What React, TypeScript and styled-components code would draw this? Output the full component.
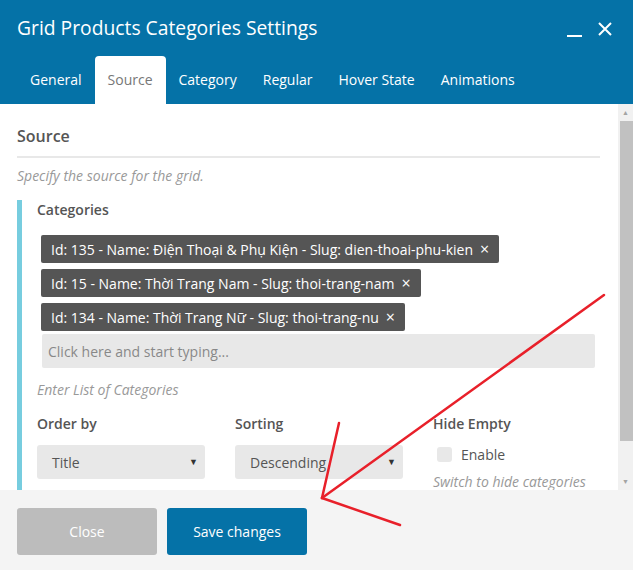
import React from 'react';
import styled, { createGlobalStyle } from 'styled-components';

const GlobalStyle = createGlobalStyle`
  html, body {
    margin: 0;
    padding: 0;
    background: #fff;
  }
  body {
    font-family: "Open Sans", "Liberation Sans", sans-serif;
  }
`;

const tabs = ['General', 'Source', 'Category', 'Regular', 'Hover State', 'Animations'];

const categories = [
  'Id: 135 - Name: Điện Thoại & Phụ Kiện - Slug: dien-thoai-phu-kien',
  'Id: 15 - Name: Thời Trang Nam - Slug: thoi-trang-nam',
  'Id: 134 - Name: Thời Trang Nữ - Slug: thoi-trang-nu',
];

const App = () => {
  return (
    <>
      <GlobalStyle />
      <Modal>
        <Header>
          <TitleRow>
            <Title>Grid Products Categories Settings</Title>
            <HeaderActions>
              <Minimize />
              <CloseIcon viewBox="0 0 16 16">
                <path d="M2 2 L14 14 M14 2 L2 14" stroke="#fff" strokeWidth="2" fill="none" />
              </CloseIcon>
            </HeaderActions>
          </TitleRow>
          <Tabs>
            {tabs.map((t) => (
              <Tab key={t} active={t === 'Source'}>{t}</Tab>
            ))}
          </Tabs>
        </Header>

        <Content>
          <Body>
            <SectionTitle>Source</SectionTitle>
            <Description>Specify the source for the grid.</Description>
            <Group>
              <Label>Categories</Label>
              <TagList>
                {categories.map((c) => (
                  <Tag key={c}>
                    {c}
                    <TagRemove>×</TagRemove>
                  </Tag>
                ))}
              </TagList>
              <TagInput>Click here and start typing...</TagInput>
              <Hint top={13}>Enter List of Categories</Hint>
              <FieldRow>
                <Field>
                  <Label>Order by</Label>
                  <Select>
                    Title
                    <Caret>▼</Caret>
                  </Select>
                </Field>
                <Field>
                  <Label>Sorting</Label>
                  <Select>
                    Descending
                    <Caret>▼</Caret>
                  </Select>
                </Field>
                <Field>
                  <Label>Hide Empty</Label>
                  <CheckRow>
                    <CheckBox />
                    <CheckLabel>Enable</CheckLabel>
                  </CheckRow>
                  <Hint top={9}>Switch to hide categories</Hint>
                </Field>
              </FieldRow>
            </Group>
          </Body>
          <Scrollbar>
            <ScrollArrow>▲</ScrollArrow>
            <ScrollTrack>
              <ScrollThumb />
            </ScrollTrack>
            <ScrollArrow>▼</ScrollArrow>
          </Scrollbar>
        </Content>

        <Footer>
          <Button variant="muted">Close</Button>
          <Button variant="primary">Save changes</Button>
        </Footer>

        <Annotation viewBox="0 0 633 570">
          <g stroke="#e8202a" strokeWidth="2.5" fill="none" strokeLinecap="round">
            <line x1="604" y1="295" x2="322" y2="498" />
            <line x1="339" y1="423" x2="322" y2="498" />
            <line x1="322" y1="498" x2="400" y2="525" />
          </g>
        </Annotation>
      </Modal>
    </>
  );
};

export default App;

const Modal = styled.div`
  position: relative;
  width: 633px;
  height: 570px;
  display: flex;
  flex-direction: column;
  overflow: hidden;
  background: #fff;
`;

const Header = styled.div`
  height: 104px;
  flex: 0 0 auto;
  background: #0572a7;
  display: flex;
  flex-direction: column;
  justify-content: space-between;
`;

const TitleRow = styled.div`
  display: flex;
  align-items: center;
  justify-content: space-between;
  padding: 14px 20px 0 17px;
`;

const Title = styled.div`
  color: #fff;
  font-size: 19.3px;
  line-height: 28px;
`;

const HeaderActions = styled.div`
  display: flex;
  align-items: center;
  gap: 15px;
  padding-top: 2px;
`;

const Minimize = styled.span`
  display: block;
  width: 15px;
  height: 2px;
  background: #fff;
  margin-top: 14px;
`;

const CloseIcon = styled.svg`
  width: 16px;
  height: 16px;
`;

const Tabs = styled.div`
  display: flex;
  padding-left: 17px;
`;

const Tab = styled.div<{ active?: boolean }>`
  height: 48px;
  padding: 0 13px 2px;
  box-sizing: border-box;
  display: flex;
  align-items: center;
  font-size: 14px;
  color: ${({ active }) => (active ? '#777' : '#fff')};
  background: ${({ active }) => (active ? '#fff' : 'transparent')};
  border-radius: 4px 4px 0 0;
`;

const Content = styled.div`
  flex: 1 1 auto;
  display: flex;
  min-height: 0;
`;

const Body = styled.div`
  flex: 1 1 auto;
  overflow: hidden;
  padding: 0 18px 0 17px;
`;

const SectionTitle = styled.div`
  font-size: 16px;
  font-weight: 600;
  color: #555;
  line-height: 22px;
  padding: 21px 0 9px;
  border-bottom: 2px solid #e8e8e8;
`;

const Description = styled.div`
  font-size: 14px;
  font-style: italic;
  color: #999;
  line-height: 18px;
  padding: 9px 0 15px;
`;

const Group = styled.div`
  border-left: 5px solid #77cddf;
  padding: 0 0 20px 15px;
`;

const Label = styled.div`
  font-size: 14px;
  font-weight: 600;
  color: #555;
  line-height: 20px;
`;

const TagList = styled.div`
  display: flex;
  flex-direction: column;
  align-items: flex-start;
  gap: 6px;
  padding: 15px 0 3px 4px;
`;

const Tag = styled.div`
  display: flex;
  align-items: center;
  height: 28px;
  padding: 0 10px;
  background: #555;
  color: #fff;
  font-size: 14px;
  border-radius: 2px;
`;

const TagRemove = styled.span`
  margin-left: 7px;
  font-size: 16px;
  line-height: 1;
`;

const TagInput = styled.div`
  margin: 0 5px 0 5px;
  height: 34px;
  display: flex;
  align-items: center;
  padding-left: 6px;
  background: #e8e8e8;
  border-radius: 2px;
  font-size: 14px;
  color: #888;
`;

const Hint = styled.div<{ top: number }>`
  font-size: 14px;
  font-style: italic;
  color: #999;
  line-height: 18px;
  padding-top: ${({ top }) => top}px;
`;

const FieldRow = styled.div`
  display: grid;
  grid-template-columns: 198px 198px 1fr;
  padding-top: 15px;
`;

const Field = styled.div`
  display: flex;
  flex-direction: column;
`;

const Select = styled.div`
  position: relative;
  margin-top: 11px;
  width: 168px;
  height: 34px;
  box-sizing: border-box;
  display: flex;
  align-items: center;
  padding-left: 15px;
  background: #e8e8e8;
  border-radius: 3px;
  font-size: 14px;
  color: #555;
`;

const Caret = styled.span`
  position: absolute;
  right: 7px;
  top: 10px;
  font-size: 9px;
  color: #333;
`;

const CheckRow = styled.div`
  display: flex;
  align-items: center;
  gap: 9px;
  margin-top: 11px;
  padding-left: 4px;
`;

const CheckBox = styled.span`
  width: 15px;
  height: 15px;
  background: #e8e8e8;
  border-radius: 3px;
`;

const CheckLabel = styled.span`
  font-size: 14px;
  color: #555;
`;

const Scrollbar = styled.div`
  width: 15px;
  flex: 0 0 15px;
  background: #f1f1f1;
  display: flex;
  flex-direction: column;
  align-items: stretch;
`;

const ScrollArrow = styled.div`
  height: 17px;
  display: flex;
  align-items: center;
  justify-content: center;
  font-size: 7px;
  color: #a3a3a3;
`;

const ScrollTrack = styled.div`
  flex: 1 1 auto;
  padding-left: 2px;
  display: flex;
`;

const ScrollThumb = styled.div`
  flex: 1;
  height: 320px;
  background: #c1c1c1;
`;

const Footer = styled.div`
  height: 80px;
  flex: 0 0 auto;
  background: #f4f4f4;
  display: flex;
  align-items: flex-start;
  gap: 10px;
  padding: 18px 17px 0;
  box-sizing: border-box;
`;

const Button = styled.div<{ variant: 'muted' | 'primary' }>`
  width: 140px;
  height: 47px;
  display: flex;
  align-items: center;
  justify-content: center;
  border-radius: 3px;
  font-size: 14px;
  color: #fff;
  background: ${({ variant }) => (variant === 'primary' ? '#0572a7' : '#bcbcbc')};
`;

const Annotation = styled.svg`
  position: absolute;
  left: 0;
  top: 0;
  width: 633px;
  height: 570px;
  pointer-events: none;
`;
